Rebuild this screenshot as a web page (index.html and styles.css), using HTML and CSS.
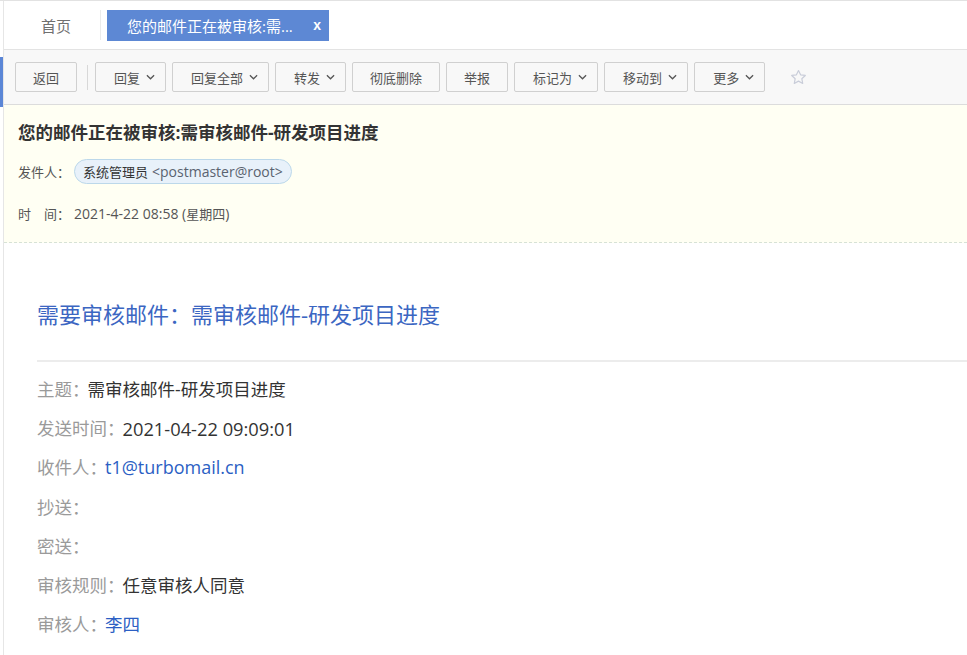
FILE: index.html
```html
<!DOCTYPE html>
<html lang="zh-CN">
<head>
<meta charset="utf-8">
<title>邮件审核</title>
<link rel="stylesheet" href="styles.css">
</head>
<body>
<div class="page">
  <div class="rail"><div class="rail-mark"></div></div>
  <div class="main">
    <div class="tabs">
      <div class="tab-home">首页</div>
      <div class="tab-sep"></div>
      <div class="tab-active"><span class="tab-title">您的邮件正在被审核:需...</span><span class="tab-close">x</span></div>
    </div>

    <div class="toolbar">
      <button class="btn">返回</button>
      <span class="tool-sep"></span>
      <button class="btn btn-drop">回复<svg class="chev" viewBox="0 0 10 6"><path d="M1 1l4 4 4-4"/></svg></button>
      <button class="btn btn-drop">回复全部<svg class="chev" viewBox="0 0 10 6"><path d="M1 1l4 4 4-4"/></svg></button>
      <button class="btn btn-drop">转发<svg class="chev" viewBox="0 0 10 6"><path d="M1 1l4 4 4-4"/></svg></button>
      <button class="btn">彻底删除</button>
      <button class="btn">举报</button>
      <button class="btn btn-drop">标记为<svg class="chev" viewBox="0 0 10 6"><path d="M1 1l4 4 4-4"/></svg></button>
      <button class="btn btn-drop">移动到<svg class="chev" viewBox="0 0 10 6"><path d="M1 1l4 4 4-4"/></svg></button>
      <button class="btn btn-drop">更多<svg class="chev" viewBox="0 0 10 6"><path d="M1 1l4 4 4-4"/></svg></button>
      <svg class="star" viewBox="0 0 20 20"><path d="M10 1.8l2.45 5.1 5.55.7-4.1 3.85 1.050 5.5L10 14.25 5.05 16.95 6.1 11.45 2 7.6l5.55-.7z"/></svg>
    </div>

    <div class="mail-head">
      <div class="mail-subject">您的邮件正在被审核:需审核邮件-研发项目进度</div>
      <div class="head-row head-from">
        <span class="head-label">发件人：</span>
        <span class="sender-chip"><span class="sender-name">系统管理员</span><span class="sender-addr">&lt;postmaster@root&gt;</span></span>
      </div>
      <div class="head-row head-time">
        <span class="head-label">时&emsp;间：</span>
        <span class="head-value"><span class="latin">2021-4-22 08:58 (</span>星期四<span class="latin">)</span></span>
      </div>
    </div>

    <div class="mail-body">
      <div class="body-title">需要审核邮件：需审核邮件-研发项目进度</div>
      <div class="body-rule"></div>
      <div class="info-list">
        <div class="info-row"><span class="info-label">主题：</span><span class="info-value">需审核邮件-研发项目进度</span></div>
        <div class="info-row"><span class="info-label">发送时间：</span><span class="info-value num">2021-04-22 09:09:01</span></div>
        <div class="info-row"><span class="info-label">收件人：</span><span class="info-value link mail">t1@turbomail.cn</span></div>
        <div class="info-row"><span class="info-label">抄送：</span></div>
        <div class="info-row"><span class="info-label">密送：</span></div>
        <div class="info-row"><span class="info-label">审核规则：</span><span class="info-value">任意审核人同意</span></div>
        <div class="info-row"><span class="info-label">审核人：</span><span class="info-value link">李四</span></div>
      </div>
    </div>
  </div>
</div>
</body>
</html>
```

FILE: styles.css
```css
html, body {
  margin: 0;
  padding: 0;
  background: #ffffff;
}

body {
  font-family: "Open Sans", "Noto Sans CJK SC", sans-serif;
  color: #333;
  overflow: hidden;
}

.page {
  display: flex;
  min-height: 655px;
  border-top: 1px solid #e2e2e2;
}

.rail {
  width: 3px;
  flex: none;
}

.rail-mark {
  margin-top: 56px;
  height: 50px;
  background: #5b86d6;
}

.main {
  flex: 1;
  min-width: 0;
  border-left: 1px solid #e6e6e6;
}

/* tabs */
.tabs {
  height: 48px;
  display: flex;
  align-items: center;
  border-bottom: 1px solid #e3e3e3;
}

.tab-home {
  width: 96px;
  box-sizing: border-box;
  padding-left: 8px;
  text-align: center;
  font-size: 15px;
  color: #707070;
}

.tab-sep {
  width: 1px;
  height: 30px;
  background: #ebebeb;
  margin-right: 6px;
}

.tab-active {
  width: 222px;
  height: 31px;
  box-sizing: border-box;
  padding: 0 7px 0 20px;
  background: #5d88d4;
  color: #fff;
  font-size: 15px;
  display: flex;
  align-items: center;
  justify-content: space-between;
}

.tab-close {
  font-family: "Liberation Sans", sans-serif;
  font-weight: bold;
  font-size: 14px;
  padding-right: 1px;
}

/* toolbar */
.toolbar {
  height: 55px;
  box-sizing: border-box;
  display: flex;
  align-items: center;
  gap: 6px;
  padding-left: 11px;
  background: #f8f8f8;
  border-bottom: 1px solid #dcdcdc;
}

.btn {
  height: 30px;
  box-sizing: border-box;
  padding: 0 17px;
  border: 1px solid #d0d0d0;
  border-radius: 2px;
  background: #f8f8f8;
  color: #555;
  font-family: "Noto Sans CJK SC", sans-serif;
  font-size: 13px;
  display: flex;
  align-items: center;
  gap: 6px;
}

.btn-drop {
  padding: 0 10px 0 18px;
}

.chev {
  width: 9px;
  height: 6px;
  fill: none;
  stroke: #555;
  stroke-width: 1.4;
}

.tool-sep {
  width: 1px;
  height: 25px;
  background: #d8d8d8;
  margin: 0 1px 0 4px;
}

.star {
  width: 17px;
  height: 17px;
  margin-left: 19px;
  fill: none;
  stroke: #c9cdd9;
  stroke-width: 1.4;
  stroke-linejoin: round;
}

/* mail head */
.mail-head {
  background: #fffff3;
  padding: 14px 14px 18px;
  border-bottom: 1px dashed #d7e2d6;
}

.mail-subject {
  font-size: 17.5px;
  font-weight: bold;
  line-height: 26px;
  color: #333;
}

.head-row {
  display: flex;
  align-items: center;
  font-size: 13px;
  color: #555;
}

.head-from {
  margin-top: 14px;
}

.head-label {
  margin-right: 4px;
}

.latin {
  font-size: 14px;
}

.sender-chip {
  height: 25px;
  box-sizing: border-box;
  padding: 0 8px;
  border: 1px solid #bcd8ea;
  border-radius: 13px;
  background: #e8f1fa;
  display: flex;
  align-items: center;
  gap: 4px;
}

.sender-name {
  color: #333;
}

.sender-addr {
  color: #5a6370;
  font-size: 14px;
}

.head-time {
  margin-top: 20px;
  line-height: 20px;
}

/* mail body */
.mail-body {
  padding: 56px 0 0 33px;
}

.body-title {
  font-size: 22px;
  line-height: 30px;
  color: #3b66c2;
}

.body-rule {
  height: 2px;
  background: #ececec;
  margin-top: 31px;
}

.info-list {
  margin-top: 8px;
}

.info-row {
  font-size: 17.5px;
  line-height: 39.2px;
  display: flex;
}

.info-label {
  color: #9a9a9a;
  margin-right: -2px;
}

.info-value {
  color: #333;
}

.info-value.num {
  font-size: 18.3px;
}

.info-value.mail {
  font-size: 18px;
}

.info-value.link {
  color: #2c5fc4;
}
```
